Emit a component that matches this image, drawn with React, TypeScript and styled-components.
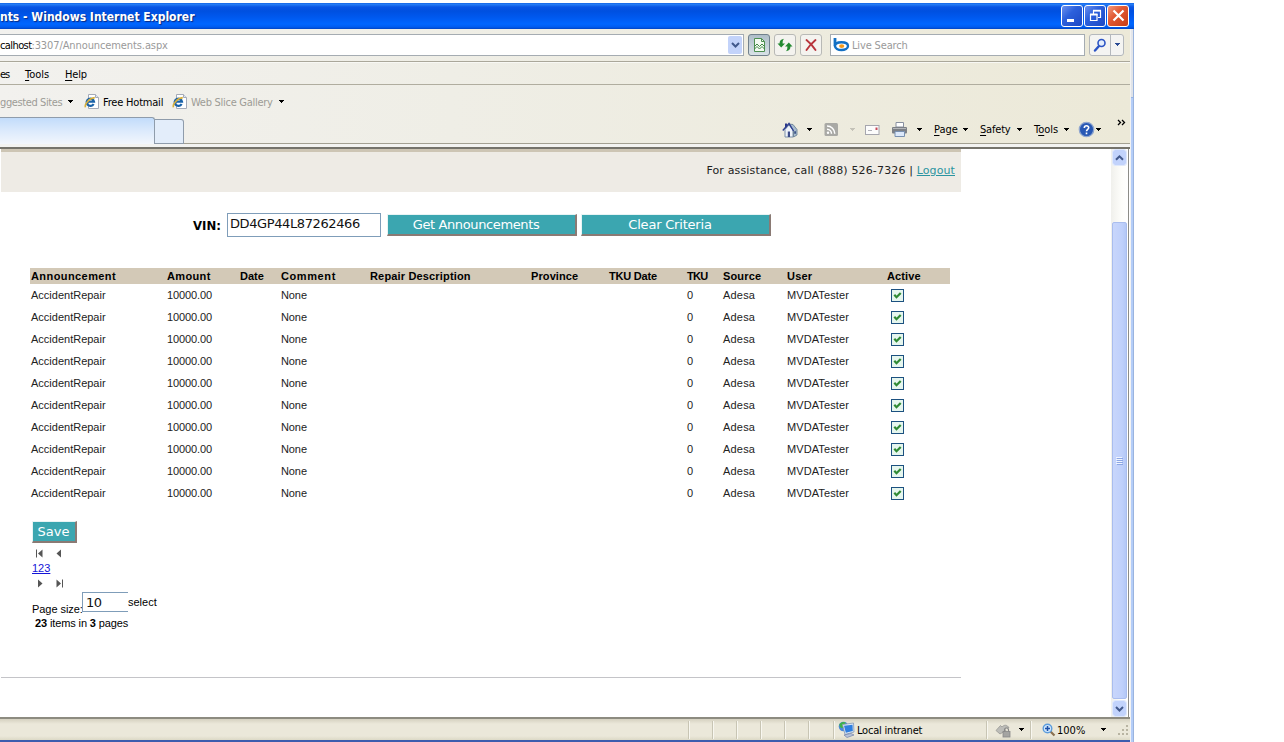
import React from "react";
import styled, { createGlobalStyle } from "styled-components";

const Global = createGlobalStyle`
  * { box-sizing: border-box; }
  html, body { margin: 0; padding: 0; background: #fff; overflow: hidden; }
  svg { display: block; flex: none; }
`;

const tahoma = `"DejaVu Sans Condensed", "DejaVu Sans", sans-serif`;
const verdana = `"DejaVu Sans", sans-serif`;
const arial = `"Liberation Sans", Arial, sans-serif`;

const Window = styled.div`
  width: 1134px;
  height: 742px;
  padding-top: 3px;
  display: flex;
  flex-direction: column;
  font: 11px/14px ${tahoma};
  color: #000;
  overflow: hidden;
`;

const TitleBar = styled.header`
  height: 26px;
  flex: none;
  display: flex;
  align-items: center;
  padding-right: 5px;
  background: linear-gradient(#0a5ae0 0, #2a82f8 1px, #0a56e4 4px, #0050e0 8px, #0058ee 14px, #0066ff 21px, #005cf0 24px, #0044c4 26px);
`;

const Title = styled.h1`
  margin: 1px auto 0 0;
  font: bold 12px/16px ${tahoma};
  color: #fff;
  text-shadow: 1px 1px 1px #0a2a80;
  white-space: nowrap;
`;

const CaptionButton = styled.span<{ $close?: boolean }>`
  width: 22px;
  height: 22px;
  margin-left: 1px;
  margin-bottom: 1px;
  display: grid;
  place-items: center;
  border: 1px solid #fff;
  border-radius: 3px;
  background: ${(p) =>
    p.$close
      ? "linear-gradient(135deg, #f09a80, #e25a34 40%, #c83c14)"
      : "linear-gradient(135deg, #6c90ee, #2c60dc 40%, #1c48c4)"};
`;

const Frame = styled.div`
  flex: 1;
  min-height: 0;
  display: flex;
`;

const Body = styled.div`
  width: 1130px;
  flex: none;
  display: flex;
  flex-direction: column;
`;

const Edge = styled.div`
  width: 4px;
  background: linear-gradient(#e4e6ea, #dfe3e8 68px, #7a9ad0 68px, #b4cdf8 69px, #b4cdf8);
  border-right: 1px solid #9ab4de;
  border-left: 1px solid #f2f2f2;
`;

const Chrome = styled.div`
  flex: none;
  background: linear-gradient(90deg, #f2f1ee, #efeee6 40%, #ece9d8);
`;

const AddressRow = styled.div`
  height: 33px;
  display: flex;
  align-items: flex-start;
  padding-top: 5px;
  border-bottom: 1px solid #aaa79a;
`;

const AddressBox = styled.div`
  width: 744px;
  height: 22px;
  display: flex;
  align-items: center;
  justify-content: space-between;
  background: #fff;
  border: 1px solid #a5acb2;
  border-left: 0;
  padding-right: 1px;
`;

const Address = styled.span`
  padding-top: 2px;
  color: #9a9a9a;
  letter-spacing: -0.1px;
  white-space: nowrap;
  b { font-weight: normal; color: #000; letter-spacing: -0.6px; }
`;

const DropButton = styled.span`
  width: 14px;
  height: 18px;
  display: grid;
  place-items: center;
  background: #c3d3fa;
  border-radius: 2px;
`;

const ToolButton = styled.span<{ $pressed?: boolean }>`
  width: 22px;
  height: 22px;
  margin-left: 4px;
  display: grid;
  place-items: center;
  border: 1px solid ${(p) => (p.$pressed ? "#71808c" : "#b8b9b6")};
  border-radius: 3px;
  background: ${(p) => (p.$pressed ? "linear-gradient(#aebdc8, #d8e2e6)" : "#f4f3ef")};
`;

const SearchBox = styled.div`
  width: 255px;
  height: 22px;
  margin-left: 8px;
  padding-left: 2px;
  display: flex;
  align-items: center;
  gap: 2px;
  background: #fff;
  border: 1px solid #a5acb2;
  color: #9a9a9a;
`;

const Placeholder = styled.span`
  padding-top: 2px;
  letter-spacing: -0.15px;
`;

const SearchGo = styled.div`
  width: 35px;
  height: 22px;
  margin-left: 4px;
  display: flex;
  border: 1px solid #b4b8bc;
  border-radius: 3px;
  background: #f4f4f2;
`;

const GoCell = styled.span<{ $w: number; $line?: boolean }>`
  width: ${(p) => p.$w}px;
  display: grid;
  place-items: center;
  border-left: ${(p) => (p.$line ? "1px solid #b4b8bc" : "0")};
`;

const MenuRow = styled.nav`
  height: 23px;
  display: flex;
  align-items: center;
  padding-top: 2px;
  border-bottom: 1px solid #b0ad9f;
  border-top: 1px solid #f8f8f4;
`;

const Slot = styled.span<{ $w?: number; $ls?: number; $muted?: boolean; $shift?: number; $top?: number }>`
  flex: none;
  width: ${(p) => (p.$w ? `${p.$w}px` : "auto")};
  padding-top: ${(p) => p.$top ?? 0}px;
  text-indent: ${(p) => p.$shift ?? 0}px;
  letter-spacing: ${(p) => p.$ls ?? 0}px;
  color: ${(p) => (p.$muted ? "#9d9c96" : "inherit")};
  white-space: nowrap;
  u { text-underline-offset: 2px; }
`;

const FavRow = styled.div`
  height: 32px;
  display: flex;
  align-items: center;
  padding-top: 1px;
`;

const TabRow = styled.div`
  height: 27px;
  display: flex;
  align-items: flex-end;
`;

const ActiveTab = styled.div`
  width: 155px;
  height: 27px;
  border: 1px solid #8f9cab;
  border-left: 0;
  border-bottom: 0;
  border-radius: 0 3px 0 0;
  background: linear-gradient(#c2dcfb, #dceafc 50%, #f2f6fc);
`;

const NewTab = styled.div`
  width: 29px;
  height: 25px;
  border: 1px solid #8f9cab;
  border-left: 0;
  border-radius: 0 3px 0 0;
  background: #e3edfa;
`;

const CommandBar = styled.div`
  flex: 1;
  height: 28px;
  padding: 0 0 0 598px;
  display: flex;
  align-items: center;
  align-self: flex-end;
  border-bottom: 1px solid #a3a092;
`;

const Glyph = styled.span<{ $w: number; $up?: number }>`
  flex: none;
  width: ${(p) => p.$w}px;
  padding-bottom: ${(p) => p.$up ?? 0}px;
  display: flex;
  align-items: center;
`;

const Divider = styled.div`
  height: 5px;
  background: #f3f3f1;
  border-bottom: 2px solid #75736b;
`;

const Viewport = styled.div`
  flex: 1;
  min-height: 0;
  display: flex;
  background: #fff;
`;

const Page = styled.main`
  width: 1111px;
  display: flex;
  flex-direction: column;
  font-family: ${arial};
`;

const Banner = styled.div`
  width: 960px;
  height: 43px;
  margin-left: 1px;
  padding: 0 6px 2px 0;
  display: flex;
  align-items: center;
  justify-content: flex-end;
  border-top: 3px solid #cdc5b4;
  background: #eeebe5;
  font: 11px/14px ${verdana};
  letter-spacing: 0.15px;
  color: #222;
  white-space: pre;
  a { color: #2b94a0; text-decoration: underline; letter-spacing: 0.1px; }
`;

const Criteria = styled.div`
  height: 24px;
  margin: 21px 0 31px 193px;
  display: flex;
  align-items: center;
`;

const VinLabel = styled.label`
  width: 34px;
  font: bold 13px/16px ${tahoma};
  padding-top: 1px;
`;

const TextInput = styled.div<{ $w: number; $h: number; $open?: boolean; $pad?: number }>`
  width: ${(p) => p.$w}px;
  height: ${(p) => p.$h}px;
  padding: 0 0 2px ${(p) => p.$pad ?? 2}px;
  border: 1px solid #7f9db9;
  border-right-width: ${(p) => (p.$open ? 0 : 1)}px;
  font: 13px/20px ${verdana};
  letter-spacing: -0.4px;
  color: #111;
`;

const TealButton = styled.button<{ $w: number; $h: number; $ls?: number; $dx?: number; $ml?: number }>`
  width: ${(p) => p.$w}px;
  height: ${(p) => p.$h}px;
  margin: 0 0 0 ${(p) => p.$ml ?? 0}px;
  padding: 0 ${(p) => p.$dx ?? 0}px 0 0;
  border: 1px solid;
  border-color: #e8f4f4 #8a7a74 #8a7a74 #e8f4f4;
  border-right-width: 2px;
  border-bottom-width: 2px;
  background: #3ba6b0;
  color: #fff;
  font: 13px/17px ${verdana};
  letter-spacing: ${(p) => p.$ls ?? 0}px;
  white-space: nowrap;
`;

const columns = "136px 73px 41px 89px 161px 78px 78px 36px 64px 100px 1fr";

const HeadRow = styled.div`
  width: 920px;
  height: 16px;
  margin-left: 30px;
  padding-left: 1px;
  display: grid;
  grid-template-columns: ${columns};
  align-items: center;
  background: #d3c9b7;
  font: bold 11px/16px ${arial};
  white-space: nowrap;
`;

const HeadCell = styled.span<{ $ls: number }>`
  letter-spacing: ${(p) => p.$ls}px;
`;

const Row = styled.div`
  width: 920px;
  height: 22px;
  margin-left: 30px;
  padding-left: 1px;
  display: grid;
  grid-template-columns: ${columns};
  align-items: center;
  font: 11px/16px ${arial};
  color: #222;
`;

const Cell = styled.span<{ $ls?: number; $col: number }>`
  grid-column: ${(p) => p.$col};
  letter-spacing: ${(p) => p.$ls ?? 0}px;
`;

const Check = styled.span`
  grid-column: 11;
  width: 13px;
  height: 13px;
  margin-left: 4px;
  border: 1px solid #1c5180;
  background: #e6f6ee;
`;

const Footer = styled.div`
  margin: 17px 0 0 32px;
  width: 300px;
  display: flex;
  flex-direction: column;
  align-items: flex-start;
  font: 11px/14px ${arial};
`;

const Arrows = styled.div<{ $mt?: number; $pad: number }>`
  height: 15px;
  margin-top: ${(p) => p.$mt ?? 0}px;
  padding-left: ${(p) => p.$pad}px;
  display: flex;
  align-items: center;
  gap: 9px;
`;

const PageLinks = styled.a`
  height: 15px;
  line-height: 15px;
  color: #1414d8;
  text-decoration: underline;
`;

const SizeRow = styled.div`
  height: 24px;
  display: flex;
  align-items: flex-start;
  margin-top: 1px;
`;

const Rule = styled.div`
  width: 960px;
  height: 1px;
  margin: 47px 0 0 1px;
  background: #c4c4c8;
`;

const ScrollBar = styled.div`
  width: 17px;
  display: flex;
  flex-direction: column;
  background: linear-gradient(90deg, #f0f0ec, #fdfdfa 60%, #fff);
`;

const ScrollButton = styled.div`
  width: 15px;
  height: 17px;
  margin-left: 1px;
  display: grid;
  place-items: center;
  border: 1px solid #fff;
  outline: 1px solid #dfe8fb;
  outline-offset: -1px;
  border-radius: 3px;
  background: #c2d3fc;
`;

const ScrollThumb = styled.div`
  width: 15px;
  height: 477px;
  margin: auto 0 1px 1px;
  display: grid;
  place-items: center;
  border: 1px solid #a9bdee;
  border-radius: 2px;
  background: linear-gradient(90deg, #c8d6fb, #bfd0fb 70%, #b4c8f6);
`;

const InnerEdge = styled.div`
  width: 2px;
  background: #fff;
  border-left: 1px solid #8c8c88;
`;

const StatusBar = styled.footer`
  height: 25px;
  flex: none;
  display: flex;
  align-items: center;
  padding-left: 688px;
  border-top: 2px solid #8d8b80;
  border-bottom: 2px solid #3c5cae;
  background: linear-gradient(#d5d1c0, #ebe8da 5px, #ebe8da 17px, #dcd9c6);
`;

const Pane = styled.div<{ $w: number; $pad?: number }>`
  flex: none;
  width: ${(p) => p.$w}px;
  height: 18px;
  padding-left: ${(p) => p.$pad ?? 0}px;
  display: flex;
  align-items: center;
  border-left: 1px solid #c8c5b4;
  box-shadow: inset 1px 0 #f8f7f0;
`;

const Down = ({ c = "#000" }: { c?: string }) => (
  <svg width="7" height="4" viewBox="0 0 7 4" shapeRendering="crispEdges">
    <path d="M0.5 0h6L3.5 3.5z" fill={c} />
  </svg>
);

const Chevron = ({ up }: { up?: boolean }) => (
  <svg width="9" height="8" viewBox="0 0 9 8">
    <path d={up ? "M1 5.8 4.5 2.3 8 5.8" : "M1 2 4.5 5.5 8 2"} fill="none" stroke="#42598c" strokeWidth="2" />
  </svg>
);

const IEPage = () => (
  <svg width="16" height="17" viewBox="0 0 16 17">
    <path d="M4.500 1.500h7l3 3v11h-10z" fill="#fff" stroke="#a4aab8" />
    <path d="M11.500 1.500v3h3" fill="#dfe6f2" stroke="#a4aab8" />
    <path d="M9.600 11A3.700 3.700 0 1 1 10 8.700H3.500" fill="none" stroke="#1a62a8" strokeWidth="2.200" />
    <path d="M1.600 14.200C0 12 5 5 10.800 4.600" fill="none" stroke="#d8b03c" strokeWidth="1.600" />
  </svg>
);

const BrokenPage = () => (
  <svg width="15" height="16" viewBox="0 0 15 16">
    <path d="M2.500 1.500h7l3 3v10h-10z" fill="#f3faf1" stroke="#4d8f50" />
    <path d="M9.500 1.500v3h3" fill="none" stroke="#4d8f50" />
    <path d="M2.500 9.500 5 7l2.500 2.500L10 7l2.500 2.500M2.500 12 5 9.500 7.500 12 10 9.500l2.500 2.500" fill="none" stroke="#3f8744" />
  </svg>
);

const Refresh = () => (
  <svg width="16" height="16" viewBox="0 0 16 16">
    <path d="M0.500 6.500H2.500C2.500 3.500 4.500 2 7.200 1.800 6 2.800 5.600 4 5.600 6.500H8L4.200 10.500z" fill="#238a30" />
    <path d="M15.500 9.500H13.500C13.500 12.500 11.500 14 8.800 14.200 10 13.200 10.400 12 10.400 9.500H8L11.800 5.500z" fill="#238a30" />
  </svg>
);

const Stop = () => (
  <svg width="14" height="14" viewBox="0 0 14 14">
    <path d="M2.500 2C5 4 9 8 11.500 12M11.500 2C8 5 5 8 2.500 12" fill="none" stroke="#b8343c" strokeWidth="1.900" strokeLinecap="round" />
  </svg>
);

const Bing = () => (
  <svg width="17" height="16" viewBox="0 0 17 16">
    <path d="M2 1v8.200" stroke="#1370c4" strokeWidth="2.800" />
    <path d="M2 9C2 6.500 5 5.300 8.500 5.300S15 6.500 15 9s-3 4-6.500 4S2 11.500 2 9z" fill="#fff" stroke="#1370c4" strokeWidth="2.400" />
    <ellipse cx="8.700" cy="9.100" rx="2.600" ry="1.900" fill="#f39a1c" />
  </svg>
);

const Magnifier = () => (
  <svg width="14" height="14" viewBox="0 0 14 14">
    <path d="M6 8 2 12.500" stroke="#2c54c4" strokeWidth="2.400" strokeLinecap="round" />
    <circle cx="8.500" cy="5" r="3.500" fill="#e4eefc" stroke="#2c54c4" strokeWidth="1.600" />
  </svg>
);

const Home = () => (
  <svg width="17" height="18" viewBox="0 0 17 18">
    <path d="M4 2.500v5" stroke="#2c3888" strokeWidth="2" />
    <path d="M3 8.500 7 4l4 5v7H3z" fill="#eef3fa" stroke="#7c90a8" />
    <path d="M7 3l4.500 6.500V16L15 14V8.500L11 3.500z" fill="#a9bccf" stroke="#60788e" strokeWidth=".8" />
    <path d="M.8 9.500 7 2.500l4.500 7.500" fill="none" stroke="#2e3e90" strokeWidth="1.400" />
    <path d="M5.800 10.500h2.200V16H5.800z" fill="#3c4c88" />
    <path d="M12.200 10.300h1.800v2.500h-1.800z" fill="#3c5488" />
  </svg>
);

const Feed = () => (
  <svg width="15" height="15" viewBox="0 0 15 15">
    <rect x=".5" y="1" width="13.500" height="13" rx="1.500" fill="#a9a9a5" />
    <circle cx="4" cy="10.800" r="1.200" fill="#fff" />
    <path d="M3 7.200a4.500 4.500 0 0 1 4.500 4.500M3 4a7.800 7.800 0 0 1 7.800 7.700" fill="none" stroke="#fff" strokeWidth="1.500" />
  </svg>
);

const Mail = () => (
  <svg width="15" height="12" viewBox="0 0 15 12">
    <rect x=".5" y="1.500" width="13.500" height="9" fill="#fcfcfc" stroke="#a6a6ae" />
    <path d="M10.500 3.500h2v2.500h-2z" fill="#c84858" />
    <path d="M3 6.500h4" stroke="#b0b0b8" />
  </svg>
);

const Printer = () => (
  <svg width="17" height="17" viewBox="0 0 17 17">
    <path d="M5 1.500h7.500V6H5z" fill="#fff" stroke="#8890a0" />
    <rect x="1" y="6" width="15" height="6.500" rx="1" fill="#7c8086" />
    <path d="M2 7.500h13" stroke="#b4b6ba" />
    <path d="M4 10.500h9.500v5H4z" fill="#dbe8fa" stroke="#7890b0" />
  </svg>
);

const Help = () => (
  <svg width="17" height="17" viewBox="0 0 17 17">
    <circle cx="8.500" cy="8.500" r="7.200" fill="#2858b4" stroke="#8fa6cf" strokeWidth="1.300" />
    <path d="M6.300 7c0-3 4.600-2.800 4.400-.2C10.600 8.400 8.500 8.300 8.500 10.300M8.500 11.500v1.700" fill="none" stroke="#fff" strokeWidth="1.600" />
  </svg>
);

const More = () => (
  <svg width="9" height="7" viewBox="0 0 9 7">
    <path d="M1 1l2.500 2.500L1 6M5 1l2.500 2.500L5 6" fill="none" stroke="#000" strokeWidth="1.300" />
  </svg>
);

const Intranet = () => (
  <svg width="17" height="17" viewBox="0 0 17 17">
    <circle cx="5.500" cy="5.500" r="4.800" fill="#4a88d8" />
    <path d="M1.500 3c2-2.500 5-2.500 6-1.500C8 4 5 4 5 7c-2 .5-4-1-3.500-4z" fill="#3fb348" />
    <path d="M4.500 3.500 15.500 2l.5 9-9 2.500z" fill="#dce6f4" stroke="#8498b4" strokeWidth=".8" />
    <path d="M6 4.800 14.500 3.700l.3 6.300-7 1.800z" fill="#2f7fe0" />
    <path d="M6 14 13 12.500l3 1.500-7 2.500z" fill="#b8c4dc" stroke="#7080a8" strokeWidth=".7" />
  </svg>
);

const Protected = () => (
  <svg width="17" height="16" viewBox="0 0 17 16">
    <path d="M1 8.500 5.500 3.500l1.500 1.500C9 2.500 12.500 2.500 14 6c-2-1-3.500-1-4.500 1L11 8.500 5 12z" fill="#bcbcb8" stroke="#989894" strokeWidth=".8" />
    <rect x="8" y="9.500" width="7" height="5.500" fill="#a4a4a2" stroke="#888" strokeWidth=".8" />
    <path d="M9.500 9.500V8a2 2 0 0 1 4 0v1.500" fill="none" stroke="#888" strokeWidth="1.200" />
  </svg>
);

const ZoomIn = () => (
  <svg width="14" height="14" viewBox="0 0 14 14">
    <path d="M8 8l4.500 4.500" stroke="#8a7050" strokeWidth="2.200" />
    <circle cx="5.500" cy="5.500" r="4.300" fill="#cfe6fc" stroke="#5c9cdc" strokeWidth="1.400" />
    <path d="M3 5.500h5M5.500 3v5" stroke="#1c50a8" strokeWidth="1.500" />
  </svg>
);

const Tick = () => (
  <svg width="11" height="11" viewBox="0 0 11 11">
    <path d="M2.300 4.700 4.500 7.200 8.700 2.900" fill="none" stroke="#2f8a34" strokeWidth="2.200" />
  </svg>
);

const PageArrow = ({ dir, end }: { dir: "l" | "r"; end?: boolean }) => (
  <svg width="10" height="9" viewBox="0 0 10 9">
    <g transform={dir === "r" ? "translate(10 0) scale(-1 1)" : undefined}>
      {end && <path d="M1.500 .5v8" stroke="#555" />}
      <path d={end ? "M7.500 .5v8L3 4.500z" : "M7 .5v8L2.500 4.500z"} fill="#555" />
    </g>
  </svg>
);

const heads: [string, number][] = [
  ["Announcement", 0.42],
  ["Amount", 0.35],
  ["Date", 0],
  ["Comment", 0.6],
  ["Repair Description", 0.16],
  ["Province", 0.1],
  ["TKU Date", -0.2],
  ["TKU", -0.7],
  ["Source", 0.15],
  ["User", 0.2],
  ["Active", 0.1],
];

const rows = Array.from({ length: 10 }, (_, id) => ({
  id,
  announcement: "AccidentRepair",
  amount: "10000.00",
  comment: "None",
  tku: "0",
  source: "Adesa",
  user: "MVDATester",
}));

export default function App() {
  return (
    <Window>
      <Global />
      <TitleBar>
        <Title>nts - Windows Internet Explorer</Title>
        <CaptionButton>
          <svg width="19" height="19" viewBox="0 0 19 19"><path d="M4 13h7v3H4z" fill="#fff" /></svg>
        </CaptionButton>
        <CaptionButton>
          <svg width="19" height="19" viewBox="0 0 19 19">
            <path d="M7.500 8V5h7v6.500H12" fill="none" stroke="#fff" strokeWidth="1.200" />
            <path d="M7 4.500h8" stroke="#fff" strokeWidth="1.500" />
            <path d="M4.500 8.500h6.500v6H4.500z" fill="none" stroke="#fff" strokeWidth="1.200" />
            <path d="M4 8.500h7.500" stroke="#fff" strokeWidth="2" />
          </svg>
        </CaptionButton>
        <CaptionButton $close>
          <svg width="19" height="19" viewBox="0 0 19 19">
            <path d="M4.500 4.500l10 10M14.500 4.500l-10 10" stroke="#fff" strokeWidth="2.200" />
          </svg>
        </CaptionButton>
      </TitleBar>
      <Frame>
        <Body>
          <Chrome>
            <AddressRow>
              <AddressBox>
                <Address><b>calhost</b>:3307/Announcements.aspx</Address>
                <DropButton><Chevron /></DropButton>
              </AddressBox>
              <ToolButton $pressed><BrokenPage /></ToolButton>
              <ToolButton><Refresh /></ToolButton>
              <ToolButton><Stop /></ToolButton>
              <SearchBox><Bing /><Placeholder>Live Search</Placeholder></SearchBox>
              <SearchGo>
                <GoCell $w={20}><Magnifier /></GoCell>
                <GoCell $w={13} $line><Down c="#2c4c94" /></GoCell>
              </SearchGo>
            </AddressRow>
            <MenuRow>
              <Slot $w={25} $ls={-1}>es</Slot>
              <Slot $w={40}><u>T</u>ools</Slot>
              <Slot $ls={-0.2}><u>H</u>elp</Slot>
            </MenuRow>
            <FavRow>
              <Slot $w={67} $ls={-0.4} $top={2} $muted>ggested Sites</Slot>
              <Glyph $w={17}><Down /></Glyph>
              <Glyph $w={19}><IEPage /></Glyph>
              <Slot $w={69} $ls={-0.2} $top={2}>Free Hotmail</Slot>
              <Glyph $w={19}><IEPage /></Glyph>
              <Slot $w={87} $ls={-0.28} $top={2} $muted>Web Slice Gallery</Slot>
              <Glyph $w={10}><Down /></Glyph>
            </FavRow>
            <TabRow>
              <ActiveTab />
              <NewTab />
              <CommandBar>
                <Glyph $w={24}><Home /></Glyph>
                <Glyph $w={18}><Down /></Glyph>
                <Glyph $w={25}><Feed /></Glyph>
                <Glyph $w={16}><Down c="#c4c2b8" /></Glyph>
                <Glyph $w={26}><Mail /></Glyph>
                <Glyph $w={25}><Printer /></Glyph>
                <Glyph $w={18}><Down /></Glyph>
                <Slot $w={28}><u>P</u>age</Slot>
                <Glyph $w={18}><Down /></Glyph>
                <Slot $w={36} $ls={-0.2}><u>S</u>afety</Slot>
                <Glyph $w={18}><Down /></Glyph>
                <Slot $w={29}>T<u>o</u>ols</Slot>
                <Glyph $w={15}><Down /></Glyph>
                <Glyph $w={17}><Help /></Glyph>
                <Glyph $w={22}><Down /></Glyph>
                <Glyph $w={10} $up={14}><More /></Glyph>
              </CommandBar>
            </TabRow>
            <Divider />
          </Chrome>
          <Viewport>
            <Page>
              <Banner>For assistance, call (888) 526-7326 | <a>Logout</a></Banner>
              <Criteria>
                <VinLabel>VIN:</VinLabel>
                <TextInput $w={154} $h={24}>DD4GP44L87262466</TextInput>
                <TealButton $w={190} $h={22} $dx={11} $ml={6} $ls={-0.38}>Get Announcements</TealButton>
                <TealButton $w={190} $h={22} $dx={11} $ml={4} $ls={-0.2}>Clear Criteria</TealButton>
              </Criteria>
              <HeadRow>
                {heads.map(([text, ls]) => <HeadCell key={text} $ls={ls}>{text}</HeadCell>)}
              </HeadRow>
              {rows.map((r) => (
                <Row key={r.id}>
                  <Cell $col={1}>{r.announcement}</Cell>
                  <Cell $col={2} $ls={-0.1}>{r.amount}</Cell>
                  <Cell $col={4} $ls={-0.1}>{r.comment}</Cell>
                  <Cell $col={8}>{r.tku}</Cell>
                  <Cell $col={9} $ls={0.2}>{r.source}</Cell>
                  <Cell $col={10} $ls={0.1}>{r.user}</Cell>
                  <Check><Tick /></Check>
                </Row>
              ))}
              <Footer>
                <TealButton $w={45} $h={22} $dx={1}>Save</TealButton>
                <Arrows $mt={3} $pad={3}><PageArrow dir="l" end /><PageArrow dir="l" /></Arrows>
                <PageLinks>123</PageLinks>
                <Arrows $pad={3}><PageArrow dir="r" /><PageArrow dir="r" end /></Arrows>
                <SizeRow>
                  <Slot $w={50} $top={10} $ls={-0.05}>Page size:</Slot>
                  <TextInput $w={46} $h={20} $pad={3} $open>10</TextInput>
                  <Slot $top={3}>select</Slot>
                </SizeRow>
                <Slot $shift={3} $ls={-0.12}><b>23</b> items in <b>3</b> pages</Slot>
              </Footer>
              <Rule />
            </Page>
            <ScrollBar>
              <ScrollButton><Chevron up /></ScrollButton>
              <ScrollThumb>
                <svg width="7" height="8" viewBox="0 0 7 8" shapeRendering="crispEdges">
                  <path d="M0 .5h6M0 2.500h6M0 4.500h6M0 6.500h6" stroke="#f0f5ff" />
                  <path d="M1 1.500h6M1 3.500h6M1 5.500h6M1 7.500h6" stroke="#8ca6e4" />
                </svg>
              </ScrollThumb>
              <ScrollButton><Chevron /></ScrollButton>
            </ScrollBar>
            <InnerEdge />
          </Viewport>
          <StatusBar>
            <Pane $w={24} /><Pane $w={24} /><Pane $w={24} /><Pane $w={24} /><Pane $w={24} /><Pane $w={25} />
            <Pane $w={153} $pad={4}>
              <Glyph $w={19}><Intranet /></Glyph>
              <Slot $ls={-0.2} $top={2}>Local intranet</Slot>
            </Pane>
            <Pane $w={44} $pad={8}>
              <Glyph $w={23}><Protected /></Glyph>
              <Down />
            </Pane>
            <Pane $w={100} $pad={11}>
              <Glyph $w={15}><ZoomIn /></Glyph>
              <Slot $w={43} $top={2}>100%</Slot>
              <Glyph $w={17}><Down /></Glyph>
              <svg width="12" height="12" viewBox="0 0 12 12" shapeRendering="crispEdges">
                <path d="M9 1h2v2H9zM5 5h2v2H5zM9 5h2v2H9zM1 9h2v2H1zM5 9h2v2H5zM9 9h2v2H9z" fill="#b8b4a2" />
              </svg>
            </Pane>
          </StatusBar>
        </Body>
        <Edge />
      </Frame>
    </Window>
  );
}
